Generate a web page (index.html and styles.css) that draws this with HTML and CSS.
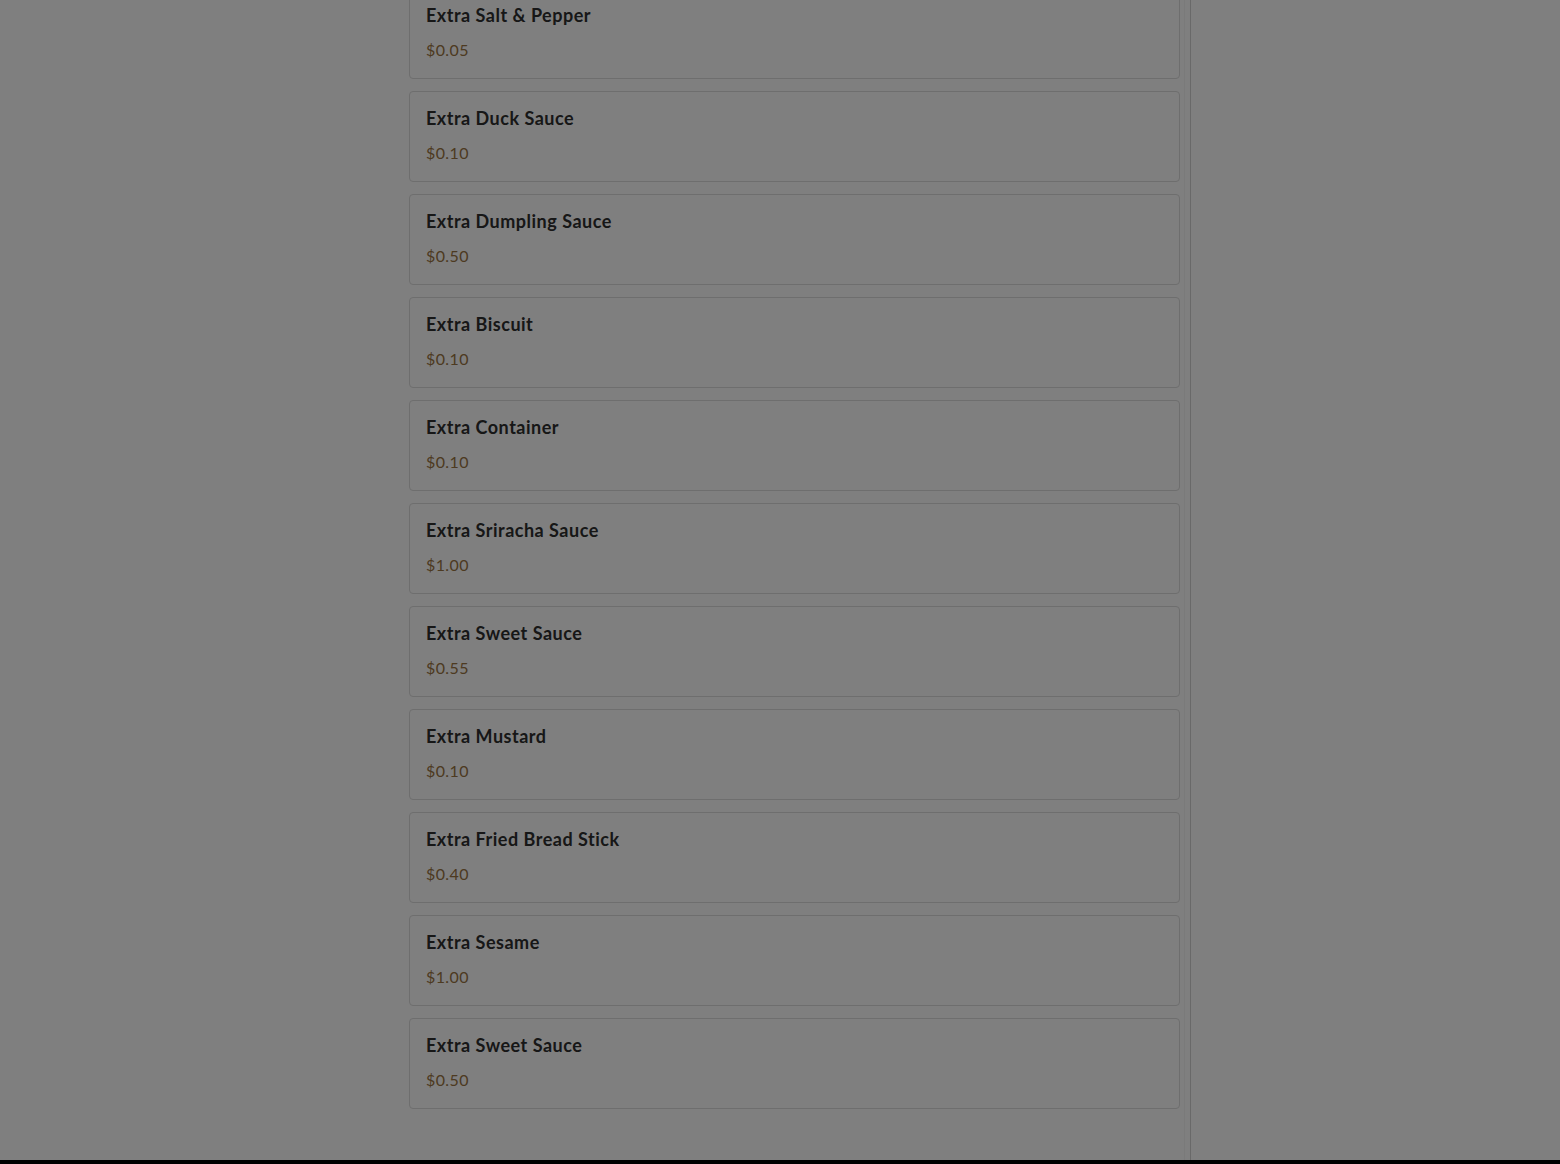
FILE: index.html
```html
<!DOCTYPE html>
<html lang="en">
<head>
<meta charset="utf-8">
<title>Extras</title>
<link rel="stylesheet" href="styles.css">
</head>
<body>
<div class="page">
  <div class="panel">
    <div class="list">
      <div class="card"><div class="name">Extra Salt &amp; Pepper</div><div class="price">$0.05</div></div>
      <div class="card"><div class="name">Extra Duck Sauce</div><div class="price">$0.10</div></div>
      <div class="card"><div class="name">Extra Dumpling Sauce</div><div class="price">$0.50</div></div>
      <div class="card"><div class="name">Extra Biscuit</div><div class="price">$0.10</div></div>
      <div class="card"><div class="name">Extra Container</div><div class="price">$0.10</div></div>
      <div class="card"><div class="name">Extra Sriracha Sauce</div><div class="price">$1.00</div></div>
      <div class="card"><div class="name">Extra Sweet Sauce</div><div class="price">$0.55</div></div>
      <div class="card"><div class="name">Extra Mustard</div><div class="price">$0.10</div></div>
      <div class="card"><div class="name">Extra Fried Bread Stick</div><div class="price">$0.40</div></div>
      <div class="card"><div class="name">Extra Sesame</div><div class="price">$1.00</div></div>
      <div class="card"><div class="name">Extra Sweet Sauce</div><div class="price">$0.50</div></div>
    </div>
    <div class="rail"></div>
  </div>
  <div class="bottom-bar"></div>
</div>
<div class="overlay"></div>
</body>
</html>
```
FILE: styles.css
```css
html, body {
  margin: 0;
  padding: 0;
  background: #ffffff;
  font-family: "Lato", "Open Sans", sans-serif;
}
.page {
  height: 100vh;
  overflow: hidden;
  display: flex;
  flex-direction: column;
}
.panel {
  flex: 1;
  min-height: 0;
  margin-left: 393px;
  width: 798px;
  padding-left: 16px;
  box-sizing: border-box;
  border-right: 1px solid #d2d2d2;
  display: flex;
  gap: 4px;
}
.list {
  width: 771px;
  margin-top: -12px;
  display: flex;
  flex-direction: column;
  gap: 12px;
}
.rail {
  width: 1px;
  background: #f4f4f4;
}
.card {
  box-sizing: border-box;
  height: 91px;
  border: 1px solid #dcdcdc;
  border-radius: 4px;
  padding: 14px 16px 15px;
  flex: none;
}
.name {
  font-size: 18px;
  line-height: 24px;
  font-weight: 700;
  letter-spacing: 0.5px;
  color: #2e2e2e;
}
.price {
  margin-top: 11px;
  font-size: 16px;
  line-height: 24px;
  letter-spacing: 0.4px;
  color: #9a7442;
}
.bottom-bar {
  height: 4px;
  background: #000;
  flex: none;
}
.overlay {
  position: fixed;
  inset: 0;
  background: rgba(0, 0, 0, 0.5);
}
```
